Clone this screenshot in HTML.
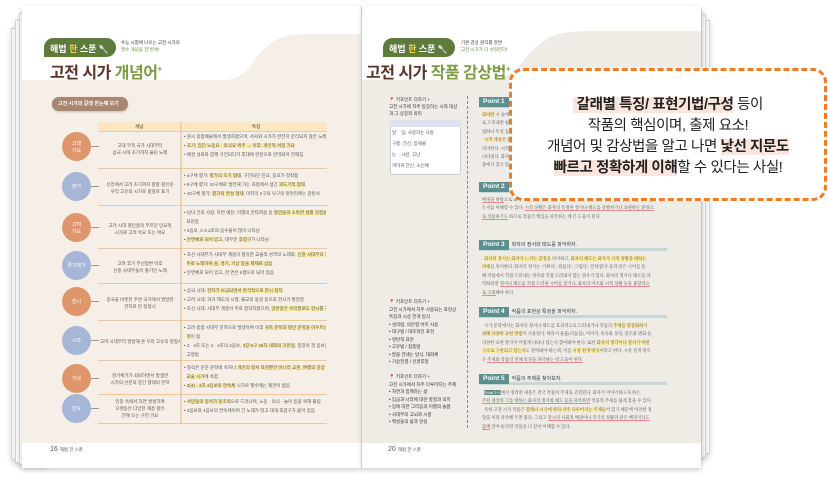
<!DOCTYPE html>
<html><head><meta charset="utf-8"><style>
*{margin:0;padding:0;box-sizing:border-box}
body{width:828px;height:479px;background:#fff;position:relative;overflow:hidden;font-family:"Liberation Sans","Noto Sans CJK KR",sans-serif}
.a{position:absolute}
.sheet{position:absolute;background:#fff;border:1px solid #d8d8d8;box-shadow:0 2px 6px rgba(0,0,0,.15)}
.t{font-size:4.5px;color:#555;line-height:9px;white-space:nowrap;overflow:hidden}
.circ{position:absolute;width:29px;height:29px;border-radius:50%;color:#fff;font-size:5px;text-align:center;display:flex;align-items:center;justify-content:center}
.o{background:#e0966c}.b{background:#a5b6d6}
.hl{background:#fbeaa8}
.pt{position:absolute;left:479px;width:188px;height:11px;border-bottom:3px solid #c7d7d9;white-space:nowrap}
.pt b{display:inline-block;background:#5c8f8e;color:#fff;font-size:6.5px;padding:0 4px;height:10px;line-height:10px;vertical-align:top}
.pt span{font-size:5px;color:#345;margin-left:3px;vertical-align:top;line-height:10px}
.rt{position:absolute;left:482px;width:184px;font-size:4.3px;color:#555;line-height:8.4px;font-family:"Liberation Serif","Noto Serif CJK SC",serif;white-space:nowrap;overflow:hidden}
.u{border-bottom:1px solid #e88;}
</style></head><body>
<div class="sheet" style="left:11px;top:28px;width:30px;height:432px"></div>
<div class="sheet" style="left:15px;top:20px;width:30px;height:443px"></div>
<div class="sheet" style="left:19px;top:13px;width:30px;height:452px"></div>
<div class="sheet" style="left:680px;top:20px;width:30px;height:434px"></div>
<div class="sheet" style="left:676px;top:14px;width:30px;height:444px"></div>
<div class="sheet" style="left:672px;top:10px;width:30px;height:450px"></div>
<div class="a" style="left:22px;top:6px;width:340px;height:462px;background:#fff;box-shadow:0 2px 5px rgba(0,0,0,.2)"></div>
<div class="a" style="left:22px;top:80px;width:340px;height:363px;background:#f6efe7"></div>
<svg class="a" style="left:22px;top:6px" width="340" height="76"><path d="M200 74 C225 74 230 55 240 45 C255 30 265 28 290 28 L340 28 L340 76 L200 76Z" fill="#f6efe7"/></svg>
<div class="a" style="left:362px;top:6px;width:339px;height:462px;background:#fff;box-shadow:0 2px 5px rgba(0,0,0,.2)"></div>
<div class="a" style="left:362px;top:80px;width:339px;height:363px;background:#efebe5"></div>
<div class="a" style="left:361px;top:6px;width:1px;height:462px;background:#ccc"></div>
<svg class="a" style="left:362px;top:6px" width="339" height="76"><path d="M130 74 C150 74 160 55 170 45 C185 30 195 25 230 25 L339 25 L339 76 L130 76Z" fill="#efebe5"/></svg>

<div class="a" style="left:44px;top:38px;width:72px;height:19px;background:#5f7b3c;border-radius:10px 10px 10px 0;color:#fff;font-size:9px;font-weight:bold;padding:4px 6px;white-space:nowrap">해법 <span style="color:#f5d24a">한</span> 스푼 <span style="font-size:8px">🥄</span></div>
<div class="a" style="left:121px;top:39px;font-size:4.5px;color:#333;line-height:7px">수능 시험에 나오는 고전 시가의<br><span style="color:#6a8a3a">필수 개념을 한 번에!</span></div>
<div class="a" style="left:50px;top:59px;font-size:16px;font-weight:bold;color:#5b3526;letter-spacing:-.5px;white-space:nowrap">고전 시가 <span style="color:#7d9c45">개념어</span><sup style="font-size:8px;color:#7d9c45">+</sup></div>
<div class="a" style="left:52px;top:97px;width:76px;height:14px;background:#a88670;border-radius:7px;color:#fff;font-size:5px;font-weight:bold;padding:3px 6px;box-shadow:0 1px 2px rgba(0,0,0,.2);white-space:nowrap;overflow:hidden">고전 시가의 갈래 한눈에 보기</div>
<div class="a" style="left:98px;top:122px;width:229px;height:10px;background:#fde6c0;border-bottom:1px solid #f0c890"></div>
<div class="a" style="left:135px;top:124px;font-size:4.5px;color:#333">개념</div>
<div class="a" style="left:252px;top:124px;font-size:4.5px;color:#333">특징</div>
<div class="a" style="left:180px;top:122px;width:2px;height:301px;background:#f0d0b0"></div>
<div class="a" style="left:98px;top:168px;width:229px;border-top:1px solid #efc6a2"></div>
<div class="a" style="left:98px;top:205px;width:229px;border-top:1px solid #efc6a2"></div>
<div class="a" style="left:98px;top:248px;width:229px;border-top:1px solid #efc6a2"></div>
<div class="a" style="left:98px;top:283px;width:229px;border-top:1px solid #efc6a2"></div>
<div class="a" style="left:98px;top:320px;width:229px;border-top:1px solid #efc6a2"></div>
<div class="a" style="left:98px;top:360px;width:229px;border-top:1px solid #efc6a2"></div>
<div class="a" style="left:98px;top:394px;width:229px;border-top:1px solid #efc6a2"></div>
<div class="a" style="left:98px;top:423px;width:229px;border-top:1px solid #efc6a2"></div>
<div class="circ o" style="left:62px;top:132px">고대<br>가요</div>
<div class="circ b" style="left:62px;top:172px">향가</div>
<div class="circ o" style="left:62px;top:213px">고려<br>가요</div>
<div class="circ b" style="left:62px;top:251px">경기체가</div>
<div class="circ o" style="left:62px;top:287px">한시</div>
<div class="circ b" style="left:62px;top:326px">시조</div>
<div class="circ o" style="left:62px;top:364px">가사</div>
<div class="circ b" style="left:62px;top:394px">민요</div>
<div class="a" style="left:91px;top:146px;width:8px;border-top:1px solid #999"></div>
<div class="a" style="left:91px;top:186px;width:8px;border-top:1px solid #999"></div>
<div class="a" style="left:91px;top:227px;width:8px;border-top:1px solid #999"></div>
<div class="a" style="left:91px;top:265px;width:8px;border-top:1px solid #999"></div>
<div class="a" style="left:91px;top:301px;width:8px;border-top:1px solid #999"></div>
<div class="a" style="left:91px;top:340px;width:8px;border-top:1px solid #999"></div>
<div class="a" style="left:91px;top:378px;width:8px;border-top:1px solid #999"></div>
<div class="a" style="left:91px;top:408px;width:8px;border-top:1px solid #999"></div>
<div class="a t" style="left:101px;top:142px;width:78px;text-align:center;line-height:7px">고대 부족 국가 시대부터<br>삼국 시대 초기까지 불린 노래</div>
<div class="a t" style="left:101px;top:181px;width:78px;text-align:center;line-height:7px">신라에서 고려 초기까지 향찰·향유된<br>우리 고유의 시가로 향찰로 표기</div>
<div class="a t" style="left:101px;top:222px;width:78px;text-align:center;line-height:7px">고려 시대 평민층의 부르던 민요적<br>시가로 고려 속요 또는 여요</div>
<div class="a t" style="left:101px;top:260px;width:78px;text-align:center;line-height:7px">고려 후기 무신정변 이후<br>신흥 사대부들이 즐기던 노래</div>
<div class="a t" style="left:101px;top:296px;width:78px;text-align:center;line-height:7px">중국을 비롯한 주변 국가에서 발달한<br>한자로 된 정형시</div>
<div class="a t" style="left:100px;top:337px;width:80px;text-align:center">고려 시대부터 발달해 온 우리 고유의 정형시</div>
<div class="a t" style="left:101px;top:372px;width:78px;text-align:center;line-height:7px">경기체가가 쇠퇴하면서 발생한<br>시가의 산문의 중간 형태의 문학</div>
<div class="a t" style="left:101px;top:398px;width:78px;text-align:center;line-height:7px">민중 속에서 자연 발생하여<br>오랫동안 다양한 계층 향유<br>전해 오는 구전 가요</div>
<div class="a t" style="left:184px;top:132px;width:142px;line-height:9px">• 원시 종합예술에서 발생하였으며, 서사와 시가가 완전히 분리되지 않은 노래<br>• <span class="hl">초기: 집단 노동요 · 의식요 위주 → 이후: 개인적 서정 가요</span><br>• 배경 설화와 함께 구전되다가 후대에 한문으로 번역되어 전해짐</div>
<div class="a t" style="left:184px;top:171px;width:142px;line-height:9px">• 4구체 향가: <span class="hl">향가의 초기 형태</span>, 구전되던 민요, 동요가 정착됨<br>• 8구체 향가: 10구체로 발전해 가는 과정에서 생긴 <span class="hl">과도기적 형태</span><br>• 10구체 향가: <span class="hl">향가의 완성 형태</span>, 마지막 2구의 낙구의 첫머리에는 감탄사</div>
<div class="a t" style="left:184px;top:208px;width:142px;line-height:9px">• 남녀 간의 사랑, 자연 예찬, 이별의 안타까움 등 <span class="hl">평민들의 소박한 생활 감정을 진솔하게</span><br>&nbsp;&nbsp;표현함<br>• 3음보, 3·3·2조의 음수율이 많이 나타남<br>• <span class="hl">분연체로 되어 있고</span>, 대부분 <span class="hl">후렴구</span>가 나타남</div>
<div class="a t" style="left:184px;top:250px;width:142px;line-height:9px">• 조선 사대부가 사대부 계층이 향유한 교술적 성격의 노래로, <span class="hl">신흥 사대부의 학식과 체험을</span><br>&nbsp;&nbsp;<span class="hl">주로 노래하며 꼴, 경기, 기상 등을 제재로 삼음</span><br>• 분연체로 되어 있고, 한 연은 6행으로 되어 있음</div>
<div class="a t" style="left:184px;top:286px;width:142px;line-height:9px">• 삼국 시대: <span class="hl">한자가 보급되면서 본격적으로 한시 창작</span><br>• 고려 시대: 과거 제도의 시행, 불교의 융성 등으로 한시가 발달함<br>• 조선 시대: 사대부 계층이 주로 창작하였으며, <span class="hl">양반층은 우리말로도 한시를 지음</span></div>
<div class="a t" style="left:184px;top:323px;width:142px;line-height:9px">• 고려 중엽 사대부 문학으로 발생하여 이후 <span class="hl">귀족 문학과 평민 문학을 아우르는 국민 문</span><br>&nbsp;&nbsp;<span class="hl">학</span>이 됨<br>• 3 · 4조 또는 4 · 4조의 4음보, <span class="hl">3장 6구 45자 내외의 기본형</span>, 종장의 첫 음보는 3음절로<br>&nbsp;&nbsp;고정됨</div>
<div class="a t" style="left:184px;top:363px;width:142px;line-height:9px">• 형식은 운문 문학에 속하나 <span class="hl">개인의 정서 표현뿐만 아니라 교훈, 여행의 감상 등을 담는</span><br>&nbsp;&nbsp;<span class="hl">교술 시가</span>에 속함<br>• <span class="hl">3(4) · 4조 4음보의 연속체</span> 시가로 행수에는 제한이 없음</div>
<div class="a t" style="left:184px;top:397px;width:142px;line-height:9px">• <span class="hl">서민들의 정서가 원초적</span>으로 드러나며, 노동 · 의식 · 놀이 등을 위해 불림<br>• 3음보와 4음보의 연속체이며 긴 노래가 많고 대개 후렴구가 붙어 있음</div>
<div class="a" style="left:50px;top:446px;font-size:7px;color:#555">16 <span style="font-size:4.5px">해법 한 스푼</span></div>

<div class="a" style="left:383px;top:38px;width:72px;height:19px;background:#5f7b3c;border-radius:10px 10px 10px 0;color:#fff;font-size:9px;font-weight:bold;padding:4px 6px;white-space:nowrap">해법 <span style="color:#f5d24a">한</span> 스푼 <span style="font-size:8px">🥄</span></div>
<div class="a" style="left:461px;top:39px;font-size:4.5px;color:#333;line-height:7px">기본 감상 원리를 알면<br><span style="color:#6a8a3a">고전 시가가 더 쉬워진다!</span></div>
<div class="a" style="left:366px;top:59px;font-size:16px;font-weight:bold;color:#5b3526;letter-spacing:-.5px;white-space:nowrap">고전 시가 <span style="color:#7d9c45">작품 감상법</span><sup style="font-size:8px;color:#7d9c45">+</sup></div>
<div class="a" style="left:467px;top:96px;height:332px;border-left:1px dashed #888"></div>
<div class="a t" style="left:389px;top:96px;line-height:7px;font-size:4.5px;color:#333">📍 키포인트 더하기 +<br>고전 시가에 자주 등장하는 시적 대상<br>과 그 상징적 의미</div>
<div class="a" style="left:390px;top:120px;width:71px;height:55px;background:#fff;border:1px solid #c8cde4;border-radius:2px"></div>
<div class="a" style="left:390px;top:120px;width:71px;height:7px;background:#dfe3f1"></div>
<div class="a t" style="left:392px;top:127px;width:68px;line-height:11px">달 &nbsp;&nbsp;&nbsp;임, 사랑하는 사람<br>구름 &nbsp;간신, 장애물<br>눈 &nbsp;&nbsp;&nbsp;시련, 고난<br>까마귀 간신, 소인배</div>
<div class="a t" style="left:389px;top:298px;line-height:7.5px;color:#333">📍 키포인트 더하기 +<br>고전 시가에서 자주 사용되는 표현상<br>특징과 시상 전개 방식<br>• 설의법, 의문형 어미 사용<br>• 대구법 / 대조적인 표현<br>• 영탄적 표현<br>• 고유법 / 점층법<br>• 말을 건네는 방식, 대화체<br>• 기승전결 / 선경후정</div>
<div class="a t" style="left:389px;top:373px;line-height:7.5px;color:#333">📍 키포인트 더하기 +<br>고전 시가에서 자주 다루어지는 주제<br>• 자연과 함께하는 삶<br>• 임금과 나라에 대한 충절과 의지<br>• 임에 대한 그리움과 이별의 슬픔<br>• 사대부의 고뇌와 시름<br>• 백성들의 삶과 현실</div>
<div class="pt" style="top:97px"><b>Point 1</b></div>
<div class="rt" style="top:111px"><span class="hl">화자란</span> 시 속에서 말하는 이로, 시인이 내세운 허구적 인물<br>로 드러내면 쉽게 화자를 찾을 수 있다.<br>범하나 특성 등을 파악해야 한다.<br>&nbsp;&nbsp;<span class="hl">시적 대상은</span> 화자가 관심을 가지고 바라보는 대상<br>의미한다. 시적 대상을 통해 화자의 정서를<br>나타낸다. 화자가 대상을 어떻게 인식하는지<br>중에서 찾고 있는 것이 중요하다.</div>
<div class="pt" style="top:182px"><b>Point 2</b></div>
<div class="rt" style="top:196px"><span class="u">배경을 바탕</span>으로 화자의 행동과 시적 대상의 묘사를 파악하여 화자가 어떤 상황에서 말하고 있<br>는지를 이해할 수 있다. <span class="u">시적 상황은 화자의 특정한 정서나 태도를 유발하거나 표현하는 환경으</span><br><span class="u">로 작용하기도</span> 하므로 작품의 핵심을 파악하는 데 큰 도움이 된다.</div>
<div class="pt" style="top:240px"><b>Point 3</b><span>화자의 정서와 태도를 파악하자.</span></div>
<div class="rt" style="top:255px">&nbsp;&nbsp;<span class="hl">화자의 정서는 화자가 느끼는 감정을</span> 의미하고, <span class="hl">화자의 태도는 화자가 시적 상황을 대하는</span><br><span class="hl">자세</span>를 의미한다. 화자의 정서는 '기쁘다', '외롭다', '그립다', '안타깝다' 등과 같은 시어를 통<br>해 작품에서 직접 드러내는 경우와 직접 드러내지 않는 경우가 있다. 화자의 정서나 태도를 파<br>악하려면 <span class="u">정서나 태도를 직접 드러낸 시어를 찾거나, 화자의 어조와 시적 상황 등을 종합적으</span><br><span class="u">로 고려</span>해야 한다.</div>
<div class="pt" style="top:307px"><b>Point 4</b><span>작품의 표현상 특징을 파악하자.</span></div>
<div class="rt" style="top:322px">&nbsp;&nbsp;시가 문학에서는 화자의 정서나 태도를 효과적으로 드러내거나 작품의 <span class="hl">주제를 형상화하기</span><br><span class="hl">위해 다양한 표현 방법</span>이 사용된다. 따라서 운율(리듬감), 이미지, 비유와 상징, 강조와 변화 등<br>다양한 표현 방식이 어떻게 나타나 있는지 찾아봐야 한다. 또한 <span class="hl">화자의 생각이나 정서가 어떤</span><br><span class="hl">구조로 구현되고 있는지</span>도 찾아봐야 하는데, 이를 <span class="hl">시상 전개 방식</span>이라고 한다. 시상 전개 방식<br>은 <span class="u">주제와 작품의 전체 특징을 파악하는 데 도움이 된다.</span></div>
<div class="pt" style="top:374px"><b>Point 5</b><span>작품의 주제를 찾아보자.</span></div>
<div class="rt" style="top:389px">&nbsp;&nbsp;<span style="background:#5c8f8e;color:#fff">Point 1~4</span>에서 정리한 내용은 결국 작품의 주제로 귀결된다. 화자가 이야기하고자 하는<br><span class="u">주된 대상과 그를 대하는 화자의 정서와 태도 등을 파악하면</span> 작품의 주제를 쉽게 찾을 수 있다.<br>&nbsp;&nbsp;특히 고전 시가 작품은 <span class="hl">갈래나 시기에 따라 자주 다루어지는 주제들</span>이 있기 때문에 이러한 경<br>향을 미리 파악해 두면 좋다. 그리고 <span class="u">당시의 사회적 배경이나 작가의 정황과 같은 배경지식도</span><br><span class="u">함께</span> 알아 둔다면 작품을 더 깊이 이해할 수 있다.</div>
<div class="a" style="left:388px;top:446px;font-size:7px;color:#555">20 <span style="font-size:4.5px">해법 한 스푼</span></div>

<div class="a" style="left:509px;top:68px;width:318px;height:133px;background:#fff;border:3px dashed #f07d26;border-radius:14px"></div>
<div class="a" style="left:509px;top:95px;width:318px;text-align:center;font-size:14.5px;line-height:21px;color:#222;letter-spacing:-.4px">
<span style="background:#fbe5dc;font-weight:bold">&nbsp;갈래별 특징/ 표현기법/구성</span> 등이<br>
작품의 핵심이며, 출제 요소!<br>
개념어 및 감상법을 알고 나면 <span style="background:#fbe5dc;font-weight:bold">낯선 지문도</span><br>
<span style="background:#fbe5dc;font-weight:bold">빠르고 정확하게 이해</span>할 수 있다는 사실!
</div>
</body></html>
